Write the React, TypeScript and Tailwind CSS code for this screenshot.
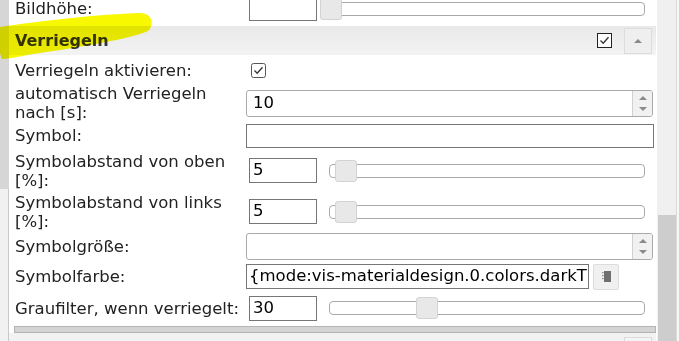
import React from "react";

const Check = ({ dark }: { dark?: boolean }) => (
  <svg width="15" height="15" viewBox="0 0 15 15" className="block">
    <rect x="0.5" y="0.5" width="14" height="14" rx={dark ? 0 : 2} fill="#fff" stroke={dark ? "#222" : "#555"} />
    <polyline points="3.5,7.5 6.2,10.2 11.5,4.2" fill="none" stroke="#333" strokeWidth="1.3" />
  </svg>
);

const SmallInput = ({ value }: { value: string }) => (
  <div className="ml-[3px] w-[68px] h-[25px] border border-[#767676] flex items-center pl-[3px] text-[16.5px] text-black bg-white shrink-0">
    {value}
  </div>
);

const Slider = ({ left }: { left: number }) => (
  <div className="relative ml-[12px] w-[316px] h-[14px] border border-[#aaa] rounded-[4px] bg-white shrink-0">
    <div
      className="absolute top-[-5px] w-[22px] h-[22px] bg-[#e8e8e8] border border-[#d3d3d3] rounded-[3px]"
      style={{ left }}
    />
  </div>
);

const TriUp = () => (
  <div className="w-0 h-0 border-l-[4px] border-r-[4px] border-b-[4px] border-l-transparent border-r-transparent border-b-[#8a8a8a]" />
);
const TriDown = () => (
  <div className="w-0 h-0 border-l-[4px] border-r-[4px] border-t-[4px] border-l-transparent border-r-transparent border-t-[#8a8a8a]" />
);

const Spinner = ({ value }: { value: string }) => (
  <div className="w-[407px] h-[27px] border border-[#aaa] rounded-[3px] flex bg-white overflow-hidden">
    <div className="flex-1 pl-[6px] flex items-center text-[16.5px] text-black">{value}</div>
    <div className="w-[20px] border-l border-[#d0d0d0] bg-[#f1f1f1] flex flex-col items-center justify-center gap-[7px]">
      <TriUp />
      <TriDown />
    </div>
  </div>
);

const Row = ({
  h,
  label,
  children,
  className = "",
}: {
  h: string;
  label: React.ReactNode;
  children?: React.ReactNode;
  className?: string;
}) => (
  <div className={`flex items-center shrink-0 ${h} ${className}`}>
    <div className="w-[237px] pl-[6px] shrink-0 leading-[19px] whitespace-nowrap text-[#222]">{label}</div>
    <div className="flex-1 flex items-center">{children}</div>
  </div>
);

export default function App() {
  return (
    <div className="relative w-[679px] h-[341px] overflow-hidden flex bg-white font-['DejaVu_Sans',Verdana,sans-serif] text-[16.5px]">
      {/* left strip */}
      <div className="w-[9px] flex flex-col shrink-0">
        <div className="h-[189px] bg-[#d6d6d6]" />
        <div className="flex-1 bg-[#f1f1f1] border-r border-[#c8c8c8]" />
      </div>

      {/* content */}
      <div className="w-[647px] flex flex-col shrink-0">
        <Row h="h-[27px]" className="mt-[-5px]" label="Bildhöhe:">
          <SmallInput value="" />
          <Slider left={-10} />
        </Row>

        <div className="mt-[4px] h-[29px] shrink-0 flex items-center justify-between pl-[6px] pr-[4px] bg-gradient-to-b from-[#e9e9e9] to-[#f3f3f3]">
          <span className="font-bold text-[16px] text-[#333]">Verriegeln</span>
          <div className="flex items-center gap-[12px]">
            <Check dark />
            <div className="w-[28px] h-[26px] border border-[#dcdcdc] bg-[#efefef] flex items-center justify-center">
              <TriUp />
            </div>
          </div>
        </div>

        <Row h="h-[31px]" label="Verriegeln aktivieren:">
          <div className="ml-[5px]">
            <Check />
          </div>
        </Row>

        <Row
          h="h-[34px]"
          label={
            <>
              automatisch Verriegeln
              <br />
              nach [s]:
            </>
          }
        >
          <Spinner value="10" />
        </Row>

        <Row h="h-[31px]" label="Symbol:">
          <div className="w-[408px] h-[24px] border border-[#767676] bg-white" />
        </Row>

        <Row
          h="h-[39px]"
          label={
            <>
              Symbolabstand von oben
              <br />
              [%]:
            </>
          }
        >
          <SmallInput value="5" />
          <Slider left={5} />
        </Row>

        <Row
          h="h-[43px]"
          label={
            <>
              Symbolabstand von links
              <br />
              [%]:
            </>
          }
        >
          <SmallInput value="5" />
          <Slider left={5} />
        </Row>

        <Row h="h-[26px]" label="Symbolgröße:">
          <Spinner value="" />
        </Row>

        <Row h="h-[35px]" label="Symbolfarbe:">
          <div className="w-[343px] h-[25px] border border-[#767676] flex items-center pl-[2px] text-[16.5px] text-black whitespace-nowrap overflow-hidden bg-white">
            {"{mode:vis-materialdesign.0.colors.darkT"}
          </div>
          <div className="ml-[4px] w-[26px] h-[26px] border border-[#dcdcdc] rounded-[2px] bg-[#f0f0f0] flex items-center justify-center">
            <svg width="9" height="11" viewBox="0 0 9 11">
              <rect x="2" y="0" width="7" height="11" fill="#6f6f6f" />
              <rect x="0" y="1" width="1.5" height="1.2" fill="#8a8a8a" />
              <rect x="0" y="4" width="1.5" height="1.2" fill="#8a8a8a" />
              <rect x="0" y="7" width="1.5" height="1.2" fill="#8a8a8a" />
            </svg>
          </div>
        </Row>

        <Row h="h-[28px]" label="Graufilter, wenn verriegelt:">
          <SmallInput value="30" />
          <Slider left={86} />
        </Row>

        <div className="mt-[4px] ml-[5px] h-[7px] shrink-0 bg-[#d4d4d4] border border-[#b4b4b4]" />
        <div className="flex-1 bg-[#f2f2f2] flex justify-end pt-[4px] pr-[4px]">
          <div className="w-[28px] h-[26px] border border-[#dcdcdc] bg-[#f4f4f4]" />
        </div>
      </div>

      <div className="w-[1px] shrink-0" />

      {/* right scrollbar */}
      <div className="w-[19px] shrink-0 bg-[#f0f0f0] flex flex-col">
        <div className="h-[215px]" />
        <div className="flex-1 ml-[1px] bg-[#cdcdcd]" />
      </div>
      <div className="w-[3px] shrink-0 bg-[#f7f7f7] border-l border-[#dadada]" />

      {/* yellow highlighter annotation */}
      <svg
        className="absolute left-0 top-0 pointer-events-none mix-blend-multiply"
        width="679"
        height="341"
        viewBox="0 0 679 341"
      >
        <path
          d="M0,27 C40,21 100,14 140,13 C152,13 155,24 148,31 C130,39 80,47 40,53 C20,56 8,59 2,59 C-2,51 -2,34 0,27 Z"
          fill="#f8f800"
        />
      </svg>
    </div>
  );
}
